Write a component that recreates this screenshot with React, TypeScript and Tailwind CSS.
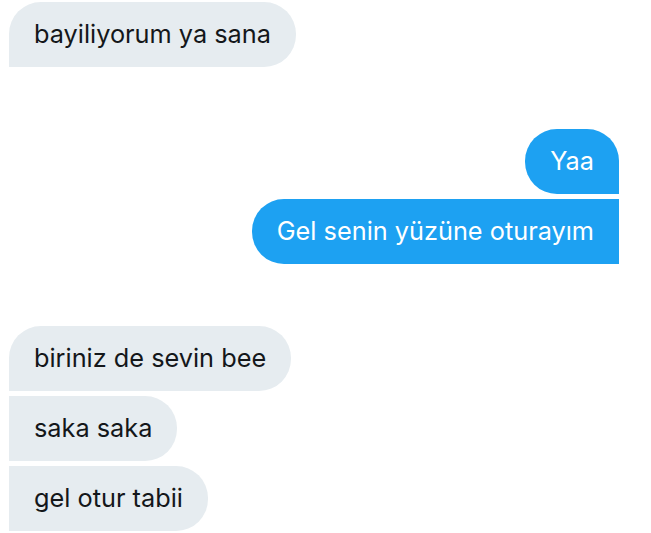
import React from "react";

type Msg = { text: string; shape: string };

const incomingTop: Msg[] = [{ text: "bayiliyorum ya sana", shape: "rounded-[32px] rounded-bl-none" }];

const outgoing: Msg[] = [
  { text: "Yaa", shape: "rounded-[32px] rounded-br-none" },
  { text: "Gel senin yüzüne oturayım", shape: "rounded-[32px] rounded-r-none" },
];

const incomingBottom: Msg[] = [
  { text: "biriniz de sevin bee", shape: "rounded-[32px] rounded-bl-none" },
  { text: "saka saka", shape: "rounded-[32px] rounded-l-none" },
  { text: "gel otur tabii", shape: "rounded-[32px] rounded-l-none" },
];

const Bubble: React.FC<{ msg: Msg; mine?: boolean }> = ({ msg, mine }) => (
  <div
    className={
      "h-[65px] flex items-center px-[25px] pb-[1px] text-[25.3px] leading-none " +
      msg.shape +
      (mine ? " bg-[#1da1f2] text-white self-end" : " bg-[#e6ecf0] text-[#14171a] self-start")
    }
  >
    {msg.text}
  </div>
);

export default function App() {
  return (
    <div
      className="w-[651px] h-[533px] overflow-hidden bg-white pt-[2px] pl-[9px] pr-[32px] flex flex-col"
      style={{ fontFamily: "Inter, 'Liberation Sans', sans-serif" }}
    >
      <div className="flex flex-col gap-[5px]">
        {incomingTop.map((m) => (
          <Bubble key={m.text} msg={m} />
        ))}
      </div>
      <div className="flex flex-col gap-[5px] mt-[62px]">
        {outgoing.map((m) => (
          <Bubble key={m.text} msg={m} mine />
        ))}
      </div>
      <div className="flex flex-col gap-[5px] mt-[62px]">
        {incomingBottom.map((m) => (
          <Bubble key={m.text} msg={m} />
        ))}
      </div>
    </div>
  );
}
